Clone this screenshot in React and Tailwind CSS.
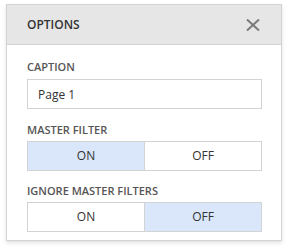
import React, { useState } from 'react';

const Toggle = ({ value, onChange }) => (
  <div className="flex h-[30px] w-[235px] border border-[#d3d3d3]">
    <button
      onClick={() => onChange(true)}
      className={`flex-1 border-r border-[#d3d3d3] text-[12px] text-[#333] ${value ? 'bg-[#dae7fa]' : 'bg-white'}`}
    >
      ON
    </button>
    <button
      onClick={() => onChange(false)}
      className={`flex-1 text-[12px] text-[#333] ${!value ? 'bg-[#dae7fa]' : 'bg-white'}`}
    >
      OFF
    </button>
  </div>
);

const Label = ({ children }) => (
  <div className="text-[11px] font-semibold leading-[14px] text-[#555]">{children}</div>
);

const App = () => {
  const [caption, setCaption] = useState('Page 1');
  const [master, setMaster] = useState(true);
  const [ignore, setIgnore] = useState(false);

  return (
    <div className="h-[249px] w-[288px] bg-white pl-[6px] pt-[4px] font-['Open_Sans',sans-serif]">
      <div className="w-[276px] border border-[#d3d3d3] bg-white shadow-[0_2px_4px_rgba(0,0,0,0.12)]">
        <div className="flex h-[40px] items-center justify-between border-b border-[#d3d3d3] bg-[#e6e6e6] pl-[20px] pr-[20px]">
          <span className="text-[12px] font-semibold text-[#333]">OPTIONS</span>
          <svg width="14" height="12" viewBox="0 0 14 12" className="mr-[1px]">
            <path d="M1 0.5 L13 11.5 M13 0.5 L1 11.5" stroke="#7a7a7a" strokeWidth="2" fill="none" />
          </svg>
        </div>
        <div className="px-[20px] pb-[8px] pt-[15px]">
          <Label>CAPTION</Label>
          <input
            value={caption}
            onChange={(e) => setCaption(e.target.value)}
            className="mt-[5px] h-[30px] w-[235px] border border-[#d3d3d3] px-[10px] text-[12px] text-[#333] outline-none"
          />
          <div className="mt-[14px]">
            <Label>MASTER FILTER</Label>
          </div>
          <div className="mt-[4px]">
            <Toggle value={master} onChange={setMaster} />
          </div>
          <div className="mt-[13px]">
            <Label>IGNORE MASTER FILTERS</Label>
          </div>
          <div className="mt-[4px]">
            <Toggle value={ignore} onChange={setIgnore} />
          </div>
        </div>
      </div>
    </div>
  );
};

export default App;
